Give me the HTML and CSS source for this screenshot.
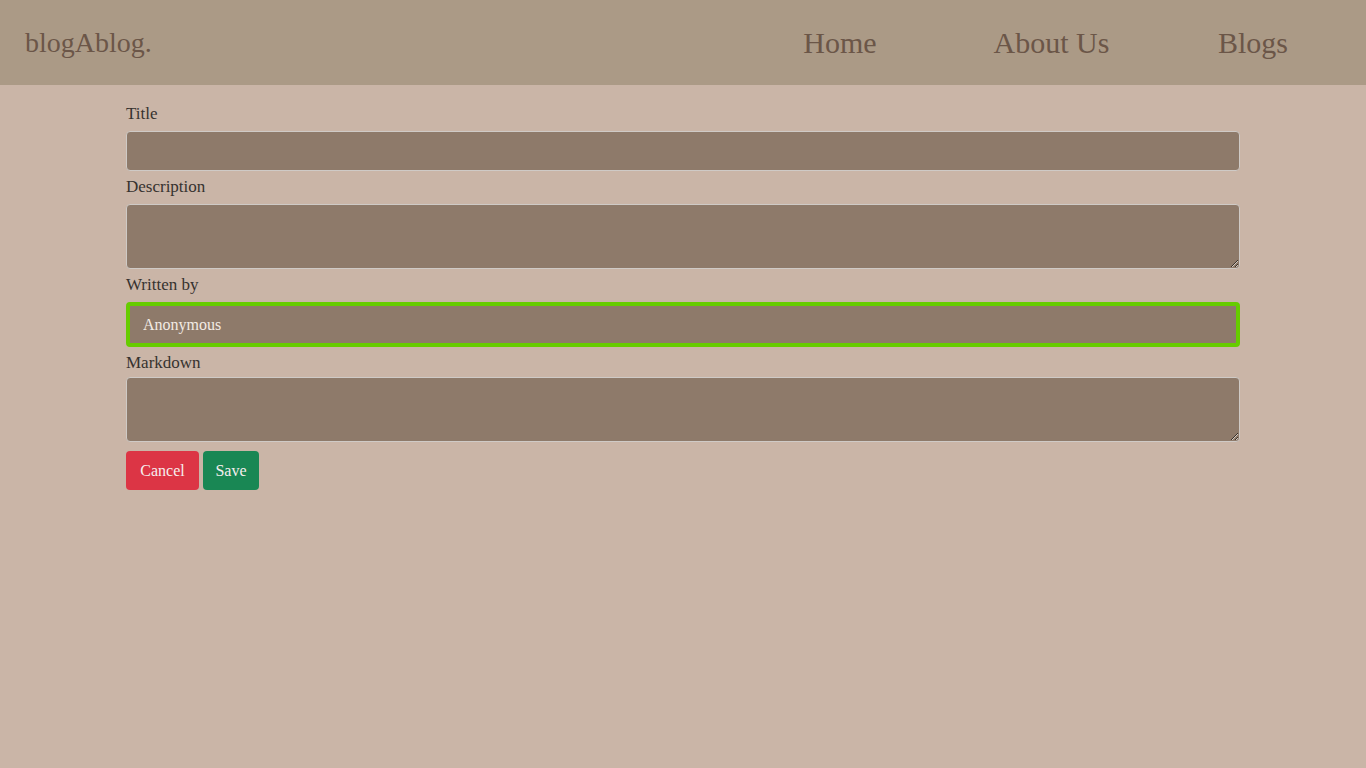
FILE: index.html
```html
<!DOCTYPE html>
<html lang="en">
<head>
<meta charset="utf-8">
<title>blogAblog.</title>
<link rel="stylesheet" href="styles.css">
</head>
<body>
<header class="topbar">
  <a class="brand" href="#">blogAblog.</a>
  <nav class="nav">
    <a class="nav-home" href="#">Home</a>
    <a class="nav-about" href="#">About Us</a>
    <a class="nav-blogs" href="#">Blogs</a>
  </nav>
</header>
<main class="container">
  <form class="form">
    <label class="form-label" for="title">Title</label>
    <input class="field field-input" id="title" type="text">
    <label class="form-label" for="desc">Description</label>
    <textarea class="field field-area" id="desc"></textarea>
    <label class="form-label" for="author">Written by</label>
    <input class="field field-input field-focus" id="author" type="text" value="Anonymous">
    <label class="form-label label-tight" for="md">Markdown</label>
    <textarea class="field field-area" id="md"></textarea>
    <div class="actions">
      <a class="btn btn-danger" href="#">Cancel</a>
      <button class="btn btn-success" type="button">Save</button>
    </div>
  </form>
</main>
</body>
</html>
```
FILE: styles.css
```css
* { box-sizing: border-box; }
html, body { margin: 0; padding: 0; }
body {
  background: #cab5a7;
  font-family: "Liberation Serif", "Times New Roman", serif;
  color: #36322f;
  min-height: 768px;
}
.topbar {
  height: 85px;
  background: #ab9a86;
  display: flex;
  align-items: center;
  justify-content: space-between;
  padding: 0 82px 0 25px;
}
.brand {
  font-size: 28px;
  color: #6b5648;
  text-decoration: none;
}
.nav {
  display: flex;
  align-items: center;
}
.nav a {
  display: flex;
  justify-content: center;
  white-space: nowrap;
  font-size: 30px;
  color: #6b5648;
  text-decoration: none;
}
.nav-home { width: 72px; }
.nav-about { width: 113px; margin-left: 119px; }
.nav-blogs { width: 62px; margin-left: 114px; }
.container {
  width: 1116px;
  margin: 0 auto;
  padding-top: 13px;
  padding-left: 1px;
}
.form {
  display: flex;
  flex-direction: column;
  align-items: stretch;
}
.form-label {
  display: block;
  font-size: 17px;
  line-height: 26px;
  padding-top: 3px;
  margin-bottom: 4px;
  color: #36322f;
}
.field {
  display: block;
  width: 1114px;
  background: #8e7a6a;
  border: 1px solid #cfcac6;
  border-radius: 4px;
  font-family: "Liberation Serif", "Times New Roman", serif;
  font-size: 16px;
  color: #f3ebe4;
  padding: 6px 12px;
  margin: 0;
  outline: none;
}
.field-input { height: 40px; }
.field-area { height: 65px; resize: vertical; }
.field-focus {
  height: 45px;
  border: 4px solid #66cc00;
  padding: 6px 13px;
}
.label-tight { margin-bottom: 1px; }
.actions {
  display: flex;
  gap: 4px;
  margin-top: 9px;
}
.btn {
  display: inline-flex;
  align-items: center;
  justify-content: center;
  height: 39px;
  padding: 0 13px;
  border: 0;
  border-radius: 4px;
  font-family: "Liberation Serif", "Times New Roman", serif;
  font-size: 16px;
  color: #f6eeee;
  text-decoration: none;
  cursor: pointer;
}
.btn-danger { background: #dc3545; width: 73px; }
.btn-success { background: #198754; width: 56px; }
```
